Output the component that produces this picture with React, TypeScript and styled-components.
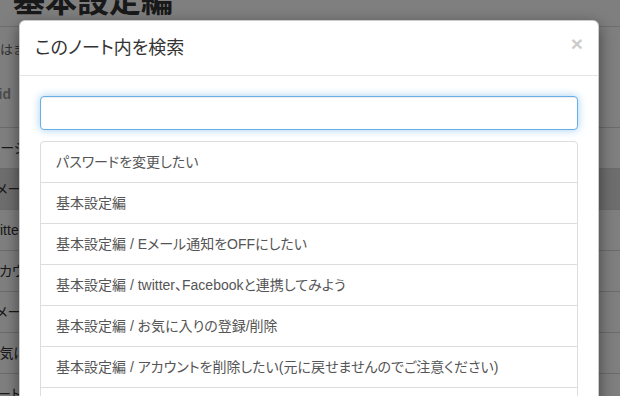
import React from "react";
import styled, { createGlobalStyle } from "styled-components";

const GlobalStyle = createGlobalStyle`
  html, body { margin: 0; padding: 0; background: #fff; overflow: hidden; }
  body {
    font-family: "Liberation Sans", "Noto Sans CJK JP", sans-serif;
    font-feature-settings: "palt";
    color: #333;
  }
  * { box-sizing: border-box; }
`;

const Page = styled.div`
  position: relative;
  width: 620px;
  height: 396px;
  overflow: hidden;
`;

const PageHeader = styled.div`
  margin-top: -16px;
  padding: 0 0 7px 13px;
  border-bottom: 1px solid #dcdcdc;
`;

const Heading = styled.h1`
  margin: 0;
  font-size: 32px;
  line-height: 35px;
  font-weight: bold;
  color: #333;
`;

const Lead = styled.p`
  margin: 13px 0 0 -12px;
  font-size: 13px;
  line-height: 20px;
  color: #666;
`;

const Meta = styled.div`
  margin: 24px 0 0 -10px;
  font-size: 14px;
  line-height: 20px;
  font-weight: bold;
  color: #999;
`;

const Table = styled.div`
  margin: 23px 0 0 -14px;
`;

const Row = styled.div<{ $active?: boolean }>`
  height: 41px;
  border-top: 1px solid #d6d6d6;
  background: ${(p) => (p.$active ? "#dcdcdc" : "transparent")};
  font-size: 14px;
  line-height: 40px;
  color: #333;
  white-space: nowrap;
`;

const Backdrop = styled.div`
  position: absolute;
  inset: 0;
  background: rgba(0, 0, 0, 0.5);
`;

const Modal = styled.div`
  position: absolute;
  top: 20px;
  left: 19px;
  width: 580px;
  background: #fff;
  border: 1px solid rgba(0, 0, 0, 0.2);
  border-radius: 6px;
  box-shadow: 0 5px 15px rgba(0, 0, 0, 0.5);
`;

const ModalHeader = styled.div`
  display: flex;
  justify-content: space-between;
  align-items: flex-start;
  padding: 15px;
  border-bottom: 1px solid #e5e5e5;
`;

const ModalTitle = styled.h4`
  margin: 0;
  font-size: 18px;
  line-height: 24px;
  font-weight: normal;
  color: #333;
`;

const CloseButton = styled.button`
  margin-top: -3px;
  padding: 0;
  background: none;
  border: 0;
  font-family: "Liberation Sans", sans-serif;
  font-size: 21px;
  font-weight: bold;
  line-height: 1;
  color: #000;
  opacity: 0.2;
  cursor: pointer;
`;

const ModalBody = styled.div`
  padding: 20px;
`;

const SearchInput = styled.input`
  display: block;
  width: 100%;
  height: 34px;
  padding: 6px 12px;
  font-size: 14px;
  color: #555;
  background: #fff;
  border: 1px solid #66afe9;
  border-radius: 4px;
  outline: none;
  box-shadow: inset 0 1px 1px rgba(0, 0, 0, 0.075),
    0 0 8px rgba(102, 175, 233, 0.6);
`;

const ResultList = styled.div`
  margin-top: 11px;
`;

const ResultItem = styled.a`
  display: block;
  margin-bottom: -1px;
  padding: 10px 15px;
  border: 1px solid #ddd;
  font-size: 14px;
  line-height: 20px;
  color: #555;
  text-decoration: none;
  white-space: nowrap;
  &:first-child {
    border-top-left-radius: 4px;
    border-top-right-radius: 4px;
  }
`;

const backgroundRows = [
  { label: "ページ", active: false },
  { label: "Eメール通知", active: true },
  { label: "twitter", active: false },
  { label: "アカウント", active: false },
  { label: "Eメール", active: false },
  { label: "お気に入り", active: false },
  { label: "ノート", active: false },
];

const results = [
  "パスワードを変更したい",
  "基本設定編",
  "基本設定編 / Eメール通知をOFFにしたい",
  "基本設定編 / twitter、Facebookと連携してみよう",
  "基本設定編 / お気に入りの登録/削除",
  "基本設定編 / アカウントを削除したい(元に戻せませんのでご注意ください)",
  "基本設定編 / ノートを共有したい",
];

export default function App() {
  return (
    <>
      <GlobalStyle />
      <Page>
        <PageHeader>
          <Heading>基本設定編</Heading>
        </PageHeader>
        <Lead>ではまず</Lead>
        <Meta>uid</Meta>
        <Table>
          {backgroundRows.map((r) => (
            <Row key={r.label + r.active} $active={r.active}>
              {r.label}
            </Row>
          ))}
        </Table>
        <Backdrop />
        <Modal>
          <ModalHeader>
            <ModalTitle>このノート内を検索</ModalTitle>
            <CloseButton aria-label="close">×</CloseButton>
          </ModalHeader>
          <ModalBody>
            <SearchInput type="text" />
            <ResultList>
              {results.map((r) => (
                <ResultItem key={r} href="#">
                  {r}
                </ResultItem>
              ))}
            </ResultList>
          </ModalBody>
        </Modal>
      </Page>
    </>
  );
}
